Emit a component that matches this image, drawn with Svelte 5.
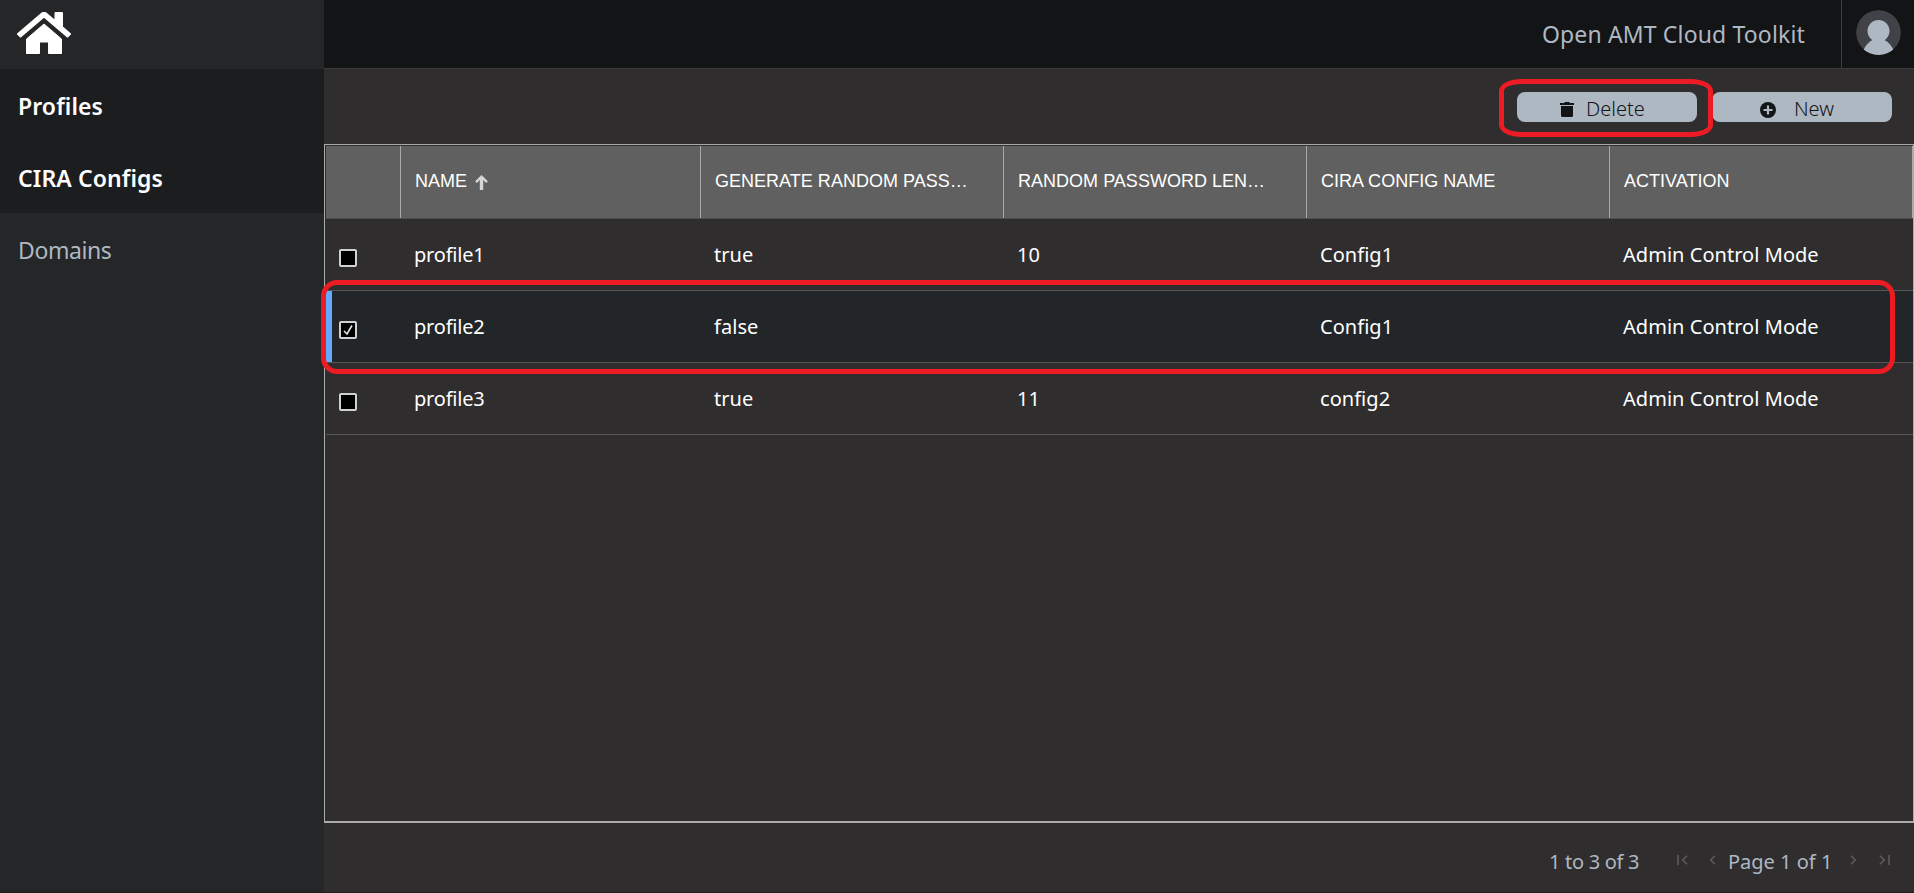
<script>
  const columns = ['NAME', 'GENERATE RANDOM PASS…', 'RANDOM PASSWORD LEN…', 'CIRA CONFIG NAME', 'ACTIVATION'];
  let rows = $state([
    { checked: false, cells: ['profile1', 'true', '10', 'Config1', 'Admin Control Mode'] },
    { checked: true, cells: ['profile2', 'false', '', 'Config1', 'Admin Control Mode'] },
    { checked: false, cells: ['profile3', 'true', '11', 'config2', 'Admin Control Mode'] }
  ]);
</script>

<div class="app">
  <aside>
    <div class="home">
      <svg width="54" height="43" viewBox="0 0 54 43" fill="#fff" stroke="#fff" stroke-linejoin="round">
        <path stroke-width="2" d="M1 22 25 1.500Q27 0 29 1.500L38.500 9.500V1H45V15L53 22 50.500 24.500 27 4.500 3.500 24.500Z" />
        <path stroke-width="1" d="M27 12 44.500 27V41.500H31.500V30H22.500V41.500H9.500V27Z" />
      </svg>
    </div>
    <nav>
      <a class="active">Profiles</a>
      <a class="active">CIRA Configs</a>
      <a>Domains</a>
    </nav>
  </aside>

  <main>
    <header>
      <div class="title">Open AMT Cloud Toolkit</div>
      <div class="user">
        <svg width="45" height="45" viewBox="0 0 45 45">
          <defs><clipPath id="disc"><circle cx="22.500" cy="22.500" r="22.500" /></clipPath></defs>
          <g clip-path="url(#disc)">
            <circle cx="22.500" cy="22.500" r="22.500" fill="#404247" />
            <circle cx="22.500" cy="21" r="11" fill="#aeb8c3" />
            <path d="M17.500 29.500H27.500Q34 32.500 37.500 40L30 46H15L7.500 40Q11 32.500 17.500 29.500Z" fill="#aeb8c3" />
          </g>
        </svg>
      </div>
    </header>

    <div class="toolbar">
      <button class="delete">
        <svg width="14" height="15" viewBox="0 0 14 15" fill="#131416">
          <path d="M0 1H4L5 0H9L10 1H14V3H0ZM1 4H13V13.500Q13 15 11.500 15H2.500Q1 15 1 13.500Z" />
        </svg>
        <span>Delete</span>
        <i class="marker"></i>
      </button>
      <button class="new">
        <svg width="16" height="16" viewBox="0 0 16 16">
          <circle cx="8" cy="8" r="8" fill="#131416" />
          <path d="M8 3.500V12.500M3.500 8H12.500" stroke="#aeb8c3" stroke-width="2.200" />
        </svg>
        <span>New</span>
      </button>
    </div>

    <section class="grid">
      <div class="line head">
        <div class="cell"></div>
        {#each columns as label, i}
          <div class="cell">
            {label}
            {#if i === 0}
              <svg width="13" height="15" viewBox="0 0 13 15" fill="none" stroke="#d6d6d6">
                <path d="M6.500 15V2" stroke-width="3.400" /><path d="M1 7.200 6.500 1.700 12 7.200" stroke-width="2.400" />
              </svg>
            {/if}
          </div>
        {/each}
      </div>
      {#each rows as row}
        <div class="line row" class:selected={row.checked}>
          <div class="pick">
            <span class="box" role="checkbox" aria-checked={row.checked} aria-label={row.cells[0]} tabindex="0">
              {#if row.checked}
                <svg width="14" height="14" viewBox="0 0 14 14" fill="none" stroke="#e4e4e4" stroke-width="1.600"><path d="M3 8 6 11 11 2.500" /></svg>
              {/if}
            </span>
          </div>
          {#each row.cells as cell, i}
            <div class="cell" class:name={i === 0}>{cell}</div>
          {/each}
          {#if row.checked}<i class="marker"></i>{/if}
        </div>
      {/each}
    </section>

    <footer>
      <span class="summary">1 to 3 of 3</span>
      <svg width="11" height="10" viewBox="0 0 11 10" class="first"><path d="M1 0V10M10 .7 5.700 5 10 9.300" /></svg>
      <svg width="7" height="10" viewBox="0 0 7 10" class="prev"><path d="M6 .7 1.700 5 6 9.300" /></svg>
      <span class="page">Page 1 of 1</span>
      <svg width="7" height="10" viewBox="0 0 7 10" class="next"><path d="M1 .7 5.300 5 1 9.300" /></svg>
      <svg width="11" height="10" viewBox="0 0 11 10" class="last"><path d="M10 0V10M1 .7 5.300 5 1 9.300" /></svg>
    </footer>
  </main>
</div>

<style>
  :global(body) { margin: 0; background: #302d2e; overflow: hidden; }
  .app {
    display: flex;
    box-sizing: border-box;
    height: 893px;
    border-bottom: 1px solid #1e2021;
    background: #302d2e;
    color: #fff;
    font: 20px/28px "Noto Sans", sans-serif;
  }
  svg { display: block; flex: none; }
  aside { width: 324px; flex: none; background: #252628; }
  .home { height: 69px; box-sizing: border-box; padding: 12px 0 0 17px; }
  nav { display: flex; flex-direction: column; }
  nav a {
    height: 72px;
    box-sizing: border-box;
    padding: 21px 0 0 18px;
    font-size: 23px;
    line-height: 32px;
    color: #aeb8c3;
    letter-spacing: -0.4px;
  }
  nav .active { background: #1c1d1f; color: #fff; font-weight: 600; letter-spacing: 0.1px; }
  main { flex: 1; min-width: 0; display: flex; flex-direction: column; }
  header {
    display: flex;
    justify-content: flex-end;
    height: 68px;
    border-bottom: 1px solid #3c3d3f;
    background: #131416;
    color: #aeb8c3;
  }
  .title { font-size: 23px; line-height: 32px; padding: 18px 36px 0 0; letter-spacing: 0.15px; }
  .user { width: 73px; box-sizing: border-box; padding: 10px 0 0 14px; border-left: 1px solid #3c3d3f; }
  .toolbar { display: flex; justify-content: flex-end; gap: 15px; height: 75px; padding: 23px 22px 0 0; box-sizing: border-box; }
  button {
    position: relative;
    display: flex;
    align-items: center;
    width: 180px;
    height: 30px;
    padding: 0;
    border: 0;
    border-radius: 8px;
    background: #aeb8c3;
    color: #131416;
    font: 300 20px/30px "Noto Sans", sans-serif;
  }
  button span { position: relative; top: 2px; }
  button svg { margin-top: 5px; }
  .delete { padding-left: 43px; gap: 12px; }
  .new { padding-left: 48px; gap: 18px; }
  .marker { position: absolute; box-sizing: border-box; border: 5px solid #ed1c24; z-index: 2; pointer-events: none; }
  .delete .marker { left: -18px; top: -13px; width: 214px; height: 58px; border-radius: 22px / 12px; }
  .grid {
    height: 679px;
    box-sizing: border-box;
    border: 1px solid #aaa;
    border-bottom-width: 2px;
    padding: 1px 0 0 1px;
  }
  .line { display: grid; grid-template-columns: 75px 300px 303px 303px 303px 1fr; position: relative; }
  .head { height: 72px; background: #606060; border-bottom: 1px solid #4d4d4d; font: 18px/22px "Liberation Sans", sans-serif; }
  .head .cell {
    display: flex;
    gap: 8px;
    border-right: 1px solid #aaa;
    padding: 24px 0 0 14px;
    letter-spacing: 0.02px;
    white-space: nowrap;
  }
  .head svg { margin-top: 5px; }
  .row { height: 71px; border-bottom: 1px solid #575656; }
  .row .cell { padding: 22px 0 0 13px; white-space: nowrap; letter-spacing: 0.04px; }
  .row .name { letter-spacing: -0.2px; }
  .selected { background: #222628; }
  .selected::before { content: ''; position: absolute; inset: 0 auto 0 0; width: 6px; background: #62abff; }
  .selected .marker { left: -5px; top: -11px; width: 1574px; height: 94px; border-radius: 16px; }
  .pick { padding: 30px 0 0 13px; }
  .box { display: block; width: 18px; height: 18px; box-sizing: border-box; border: 2px solid #d0d0d0; border-radius: 2px; background: #000; }
  footer { display: flex; align-items: center; height: 68px; padding-left: 1225px; color: #aeb8c3; }
  footer svg { fill: none; stroke: #5d5c5d; stroke-width: 1.600; margin-top: 5px; }
  footer span { white-space: nowrap; margin-top: 10px; }
  .summary { width: 128px; letter-spacing: -0.3px; }
  .prev { margin-left: 21px; }
  .page { margin-left: 12px; width: 122px; }
  .last { margin-left: 22px; }
</style>
